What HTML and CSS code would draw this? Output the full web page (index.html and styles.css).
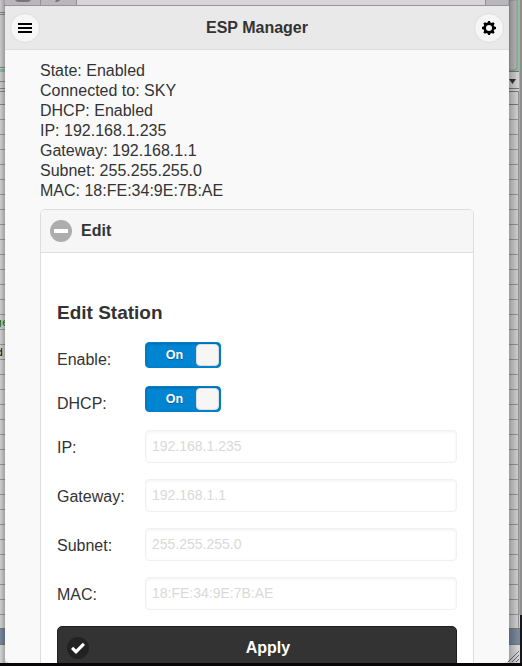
FILE: index.html
```
<!DOCTYPE html>
<html lang="en">
<head>
<meta charset="utf-8">
<title>ESP Manager</title>
<link rel="stylesheet" href="styles.css">
</head>
<body>
<svg class="desktop" width="522" height="666" aria-hidden="true">
  <defs>
    <pattern id="rows" x="0" y="119" width="522" height="15" patternUnits="userSpaceOnUse">
      <rect width="522" height="15" fill="#cecece"/><rect width="522" height="1" fill="#969696"/>
    </pattern>
    <linearGradient id="shade"><stop offset="0" stop-color="#000" stop-opacity="0"/><stop offset="1" stop-color="#000" stop-opacity=".22"/></linearGradient>
    <linearGradient id="shadeRight"><stop offset="0" stop-color="#000" stop-opacity=".24"/><stop offset="1" stop-color="#000" stop-opacity="0"/></linearGradient>
  </defs>
  <rect width="522" height="666" fill="#c9c9c9"/>
  <rect y="105" width="522" height="524" fill="url(#rows)"/>
  <path d="M0 12.500h5M0 14.500h5M0 67.500h5M0 81.500h5M0 88.500h5M0 91.500h5M0 104.500h5" stroke="#858585"/>
  <rect y="69" width="5" height="3" fill="#8fb79e"/>
  <rect x="5" width="72" height="6" fill="#b9b7b9"/>
  <rect x="77" width="408" height="6" fill="#d6d4d6"/>
  <rect x="485" width="24" height="6" fill="#b9b7b9"/>
  <path d="M40.500 0v5M76.500 0v5M485.500 0v5" stroke="#929092"/>
  <path d="M15 0h16q-1 2-4 2h-8q-3 0-4-2zM56 0h4q-1 2-5 2z" fill="#777577"/>
  <rect x="4" y="5" width="505" height="1" fill="#969496"/>
  <rect x="509" width="10" height="72" fill="#8fbd9f"/>
  <path d="M509 0h8v67q0 3-3 3h-5z" fill="#b8b8b8" stroke="#8b998f"/>
  <rect x="509" y="72" width="10" height="47" fill="#d0d0d0"/>
  <path d="M509 71.500h10M509 88.500h10M509 91.500h10M509 104.500h10" stroke="#777"/>
  <path d="M509 79h7l-3.500 5z" fill="#333"/>
  <path d="M518.500 91v538" stroke="#909090"/>
  <rect x="519" width="1" height="615" fill="#aaa"/>
  <rect x="520" width="2" height="615" fill="#8d8d8d"/>
  <rect y="629" width="520" height="15" fill="#778799"/>
  <path d="M0 628.500h520M0 644.500h520" stroke="#77797a"/>
  <rect y="645" width="520" height="18" fill="#d4d4d5"/>
  <path d="M508 662l11-11M512 662l7-7M516 662l3-3" stroke="#666"/>
  <rect width="5" height="663" fill="url(#shade)"/>
  <rect x="509" width="9" height="663" fill="url(#shadeRight)"/>
  <rect x="520" y="615" width="2" height="51" fill="#171719"/>
  <rect y="663" width="522" height="3" fill="#080607"/>
  <text class="behind green" x="-5" y="326">ge</text>
  <text class="behind" x="-4" y="356">d</text>
</svg>
<div class="window">
  <header class="bar">
    <button class="round" aria-label="Menu"><svg width="14" height="14"><path d="M0 1h14v2H0zM0 5h14v2H0zM0 9h14v2H0z" transform="translate(0 1)"/></svg></button>
    <h1>ESP Manager</h1>
    <button class="round" aria-label="Settings"><svg width="14" height="14" viewBox="0 0 14 14"><path fill-rule="evenodd" d="M14 8.100V6l-1.900-.7-.4-1 .9-1.800-1.400-1.300-1.700.8-1-.4L7.900 0H6.100l-.6 1.600-1 .4-1.700-.8-1.400 1.300.8 1.800-.4 1L0 6v2.100l1.800.7.4 1-.8 1.700 1.400 1.300 1.700-.8 1 .4.6 1.600h1.800l.6-1.600 1-.4 1.700.8 1.400-1.300-.9-1.700.4-1zM7 10a3 3 0 1 1 0-6 3 3 0 0 1 0 6z"/></svg></button>
  </header>
  <main>
    <div class="status">
      <div>State: Enabled</div><div>Connected to: SKY</div><div>DHCP: Enabled</div><div>IP: 192.168.1.235</div><div>Gateway: 192.168.1.1</div><div>Subnet: 255.255.255.0</div><div>MAC: 18:FE:34:9E:7B:AE</div>
    </div>
    <section class="card">
      <h2><span class="minus"></span>Edit</h2>
      <form>
        <h3>Edit Station</h3>
        <div class="row flip"><label>Enable:</label><div class="switch"><span>On</span><i></i></div></div>
        <div class="row flip"><label>DHCP:</label><div class="switch"><span>On</span><i></i></div></div>
        <div class="row"><label>IP:</label><div class="field">192.168.1.235</div></div>
        <div class="row"><label>Gateway:</label><div class="field">192.168.1.1</div></div>
        <div class="row"><label>Subnet:</label><div class="field">255.255.255.0</div></div>
        <div class="row"><label>MAC:</label><div class="field">18:FE:34:9E:7B:AE</div></div>
        <button class="apply" type="button"><span class="check"><svg width="14" height="14" viewBox="0 0 14 14"><path fill="#fff" d="M14 4 11.800 1.800 5 8.600 2.200 5.800 0 8l5 5z"/></svg></span><b>Apply</b></button>
      </form>
    </section>
  </main>
</div>
</body>
</html>
```
FILE: styles.css
```
* { box-sizing: border-box; }
body {
  margin: 0;
  height: 666px;
  overflow: hidden;
  padding: 6px 13px 3px 5px;
  font: 16px/20px "Liberation Sans", Arial, sans-serif;
  color: #333;
}
h1, h2, h3 { margin: 0; }
.desktop { position: absolute; left: 0; top: 0; z-index: -1; }
.behind { font: 11px "DejaVu Sans", sans-serif; fill: #111; }
.green { fill: #176b17; }
.window {
  height: 657px;
  overflow: hidden;
  background: #f9f9f9;
  border-radius: 0 0 5px 5px;
}
.bar {
  height: 44px;
  padding: 0 5px;
  display: flex;
  align-items: center;
  justify-content: space-between;
  background: #e9e9e9;
  border-bottom: 1px solid #ddd;
}
.bar h1 { font-size: 16px; line-height: 20px; padding-top: 1px; }
.round {
  width: 30px;
  height: 30px;
  padding: 0;
  border: 1px solid #ddd;
  border-radius: 50%;
  background: #f6f6f6;
  display: flex;
  align-items: center;
  justify-content: center;
}
main { padding: 11px 35px 0; }
.card {
  margin-top: 8px;
  height: 500px;
  border: 1px solid #ddd;
  border-radius: 5px 5px 0 0;
  background: #fff;
  overflow: hidden;
}
.card h2 {
  height: 43px;
  display: flex;
  align-items: center;
  gap: 9px;
  padding-left: 9px;
  font-size: 16px;
  background: #f6f6f6;
  border-bottom: 1px solid #ddd;
}
.minus {
  width: 22px;
  height: 22px;
  border-radius: 50%;
  background: #adadad;
  display: flex;
  align-items: center;
  justify-content: center;
}
.minus::before { content: ""; width: 14px; height: 4px; background: #fff; }
form { padding: 48px 16px 0; }
h3 { font-size: 19px; line-height: 23px; margin-bottom: 18px; }
.row {
  display: grid;
  grid-template-columns: 88px 1fr;
  height: 33px;
  margin-bottom: 16px;
}
.row label { padding-top: 8px; }
.flip { height: 26px; margin-bottom: 18px; }
.switch {
  width: 76px;
  height: 26px;
  padding: 1px;
  border-radius: 4px;
  background: #0085d2;
  border: 1px solid #0080cb;
  box-shadow: inset 0 1px 3px rgba(0, 0, 0, .22);
  display: flex;
  align-items: center;
  justify-content: space-between;
  color: #fff;
  font-weight: bold;
  font-size: 12.5px;
  text-shadow: 0 1px 1px #005c96;
}
.switch span { width: 49px; padding-left: 6px; text-align: center; }
.switch i {
  width: 23px;
  height: 22px;
  flex: none;
  border-radius: 4px;
  background: #f6f6f6;
  border: 1px solid #ddd;
}
.field {
  height: 33px;
  border: 1px solid #f1f1f1;
  border-radius: 4px;
  box-shadow: inset 0 1px 3px rgba(0, 0, 0, .06);
  padding: 6px;
  font-size: 14px;
  line-height: 19px;
  color: #d9d9d9;
}
.apply {
  width: 100%;
  height: 44px;
  border: 1px solid #1f1f1f;
  border-radius: 5px;
  background: #333;
  padding: 0 9px;
  display: grid;
  grid-template-columns: 22px 1fr;
  align-items: center;
  text-align: center;
  color: #fff;
  font: 16px/20px "Liberation Sans", Arial, sans-serif;
}
.check {
  width: 22px;
  height: 22px;
  border-radius: 50%;
  background: #222;
  display: flex;
  align-items: center;
  justify-content: center;
}
```
